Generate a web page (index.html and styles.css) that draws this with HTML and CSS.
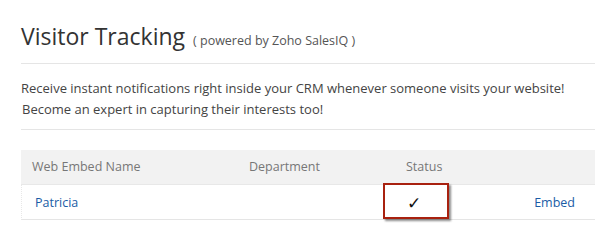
FILE: index.html
```html
<!DOCTYPE html>
<html>
<head>
<meta charset="utf-8">
<link rel="stylesheet" href="styles.css">
</head>
<body>
<div class="card">
  <div class="head">
    <h1 class="title">Visitor Tracking</h1>
    <span class="sub">( powered by Zoho SalesIQ )</span>
  </div>
  <div class="desc">
    <p>Receive instant notifications right inside your CRM whenever someone visits your website!</p>
    <p class="second">Become an expert in capturing their interests too!</p>
  </div>
  <div class="table">
    <div class="th">Web Embed Name</div>
    <div class="th">Department</div>
    <div class="th">Status</div>
    <div class="th"></div>
    <div class="td name">Patricia</div>
    <div class="td"></div>
    <div class="td status"><span class="check">✓</span><span class="mark"></span></div>
    <div class="td embed">Embed</div>
  </div>
</div>
</body>
</html>
```
FILE: styles.css
```css
html, body { background: #fff; }
body {
  margin: 8px;
  font-family: "Open Sans", "Noto Sans", sans-serif;
}
.card {
  height: 228px;
  width: 587px;
  box-sizing: border-box;
  background: #fff;
  box-shadow: 0 1px 6px rgba(0,0,0,0.32);
  padding-left: 13px;
}
.head {
  display: flex;
  align-items: baseline;
  height: 56px;
  box-sizing: border-box;
  padding-top: 12px;
  border-bottom: 1px solid #e5e5e5;
}
.title {
  margin: 0;
  font-weight: 400;
  font-size: 23px;
  line-height: 32px;
  color: #333;
}
.sub {
  margin-left: 8px;
  font-size: 12.5px;
  color: #555;
}
.desc {
  height: 66px;
  box-sizing: border-box;
  padding-top: 14px;
  border-bottom: 1px solid #e5e5e5;
  font-size: 13px;
  color: #444;
}
.desc p { margin: 0; line-height: 21px; }
.desc .second { padding-left: 1px; }
.table {
  margin-top: 20px;
  display: grid;
  grid-template-columns: 217px 157px 1fr auto;
  font-size: 12.5px;
}
.th {
  background: #f2f2f2;
  color: #777;
  height: 34px;
  line-height: 34px;
  padding-left: 11px;
  border-bottom: 1px solid #e8e8e8;
}
.td {
  height: 34px;
  line-height: 36px;
  padding-left: 11px;
  border-bottom: 1px solid #e5e5e5;
}
.name { color: #1a5ca6; padding-left: 13px; border-left: 1px dotted #e8e8e8; }
.embed { color: #1a5ca6; padding-right: 20px; }
.status { position: relative; }
.check {
  font-family: "DejaVu Sans", sans-serif;
  font-size: 17px;
  color: #111;
  padding-left: 1px;
}
.mark {
  position: absolute;
  left: -12px;
  top: -2px;
  width: 66px;
  height: 36px;
  box-sizing: border-box;
  border: 2px solid #a8210f;
  box-shadow: 2px 2px 2px rgba(0,0,0,0.45);
}
```
